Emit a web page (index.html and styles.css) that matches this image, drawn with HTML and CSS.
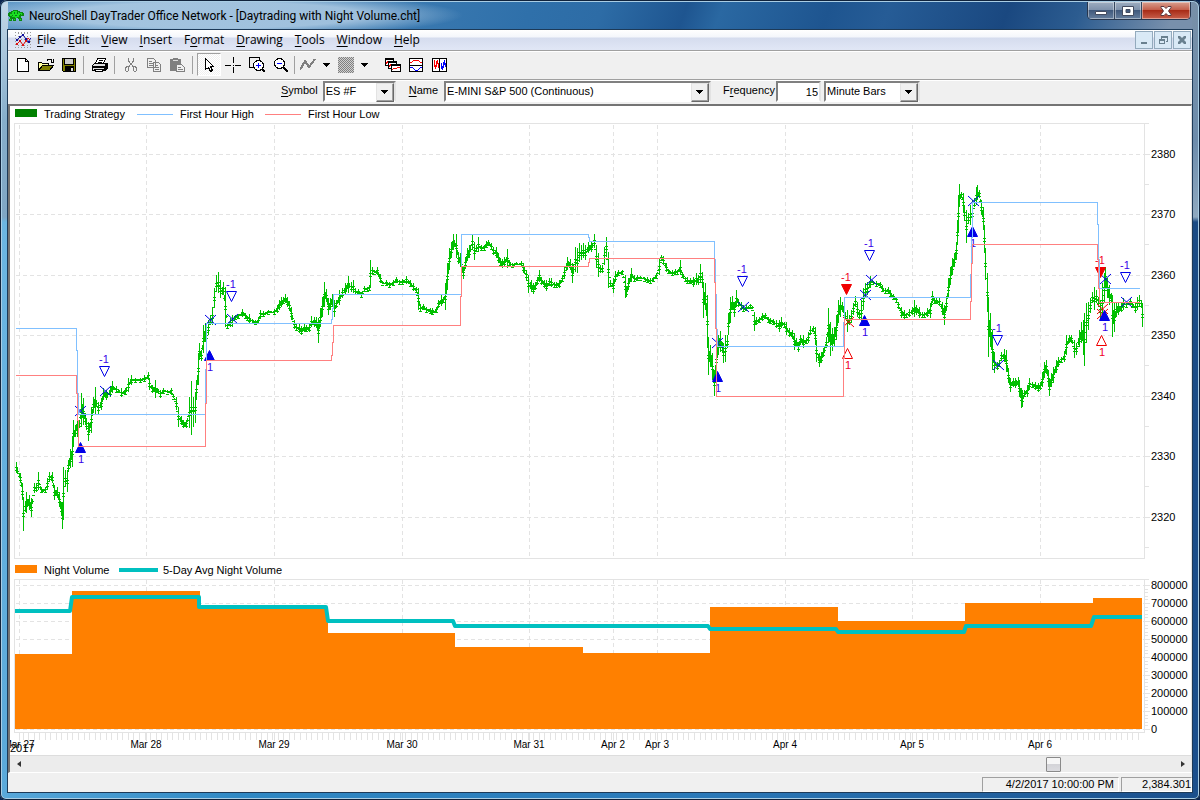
FILE: index.html
```html
<!DOCTYPE html>
<html lang="en">
<head>
<meta charset="utf-8">
<title>NeuroShell DayTrader Office Network</title>
<link rel="stylesheet" href="styles.css">
</head>
<body>
<div class="window">
  <header class="titlebar">
    <svg class="app-icon" viewBox="0 0 16 14" aria-hidden="true"><path fill="#0b8a12" d="M5 1h5v1h2v1h3v1h1v3h-3v2h1v3h-3v-2h-1v-1H8v3H5v-2H4v2H1v-2h1V8H1V7H0V4h1V3h2V2h2z"/><path fill="#18e020" d="M5 2h4v1h2v1h3v2h-3v2H9v1H7V8H4V7H2V5h2V3h1zM2 10h1v1H2zM6 10h1v1H6zM12 10h1v1h-1z"/><path fill="#0b7a12" d="M6 3h1v2H6zM9 3h1v2H9zM7 6h2v1H7zM4 6h1v1H4zM12 5h1v1h-1z"/></svg>
    <h1 class="title">NeuroShell DayTrader Office Network - [Daytrading with Night Volume.cht]</h1>
    <div class="caption">
      <button class="cap" aria-label="Minimize"><svg viewBox="0 0 14 12"><path fill="#fff" stroke="#444c60" d="M1.500 6.500h11v3h-11z"/></svg></button>
      <button class="cap" aria-label="Restore"><svg viewBox="0 0 14 12"><path fill="#fff" fill-rule="evenodd" stroke="#444c60" d="M1.500 1.500h11v9h-11zM5 4.500v3h4v-3z"/></svg></button>
      <button class="cap cap-close" aria-label="Close"><svg viewBox="0 0 14 12"><path fill="#fff" stroke="#5a3a40" d="M2 1.500h3l2 2 2-2h3v1L9.500 6l2.500 3.500v1H9l-2-2-2 2H2v-1L4.500 6 2 2.500z"/></svg></button>
    </div>
  </header>
  <main class="client">
    <nav class="menubar">
      <svg class="doc-icon" viewBox="0 0 16 16" aria-hidden="true"><path d="M.5 0v16M15.500 0v16M0 .5h16M0 15.500h16M3.500 1v14M6.500 1v14M9.500 1v14M12.500 1v14" stroke="#999" stroke-dasharray="1 2" fill="none"/><path d="M2 8l3-3 3-2 3 4 2 3 3-4" stroke="#10109c" stroke-width="1" fill="none"/><path d="M2 12l3-3 3 4 3-4 2-3 2 2" stroke="#e01010" stroke-width="1" fill="none"/><path d="M1 7h2v2H1zM4 4h2v2H4zM7 2h2v2H7zM10 6h2v2h-2zM13 9h2v2h-2z" fill="#10109c"/><path d="M1 11h2v2H1zM4 8h2v2H4zM7 12h2v2H7zM10 8h2v2h-2z" fill="#e01010"/></svg>
      <button class="menu"><u>F</u>ile</button>
      <button class="menu"><u>E</u>dit</button>
      <button class="menu"><u>V</u>iew</button>
      <button class="menu"><u>I</u>nsert</button>
      <button class="menu">F<u>o</u>rmat</button>
      <button class="menu"><u>D</u>rawing</button>
      <button class="menu"><u>T</u>ools</button>
      <button class="menu"><u>W</u>indow</button>
      <button class="menu"><u>H</u>elp</button>
      <div class="mdi">
        <button class="mdi-btn" aria-label="Minimize chart"><svg viewBox="0 0 16 16"><path d="M5 10h6v2H5z"/></svg></button>
        <button class="mdi-btn" aria-label="Restore chart"><svg viewBox="0 0 16 16"><path fill-rule="evenodd" d="M6 4h7v6h-2V9h1V6H7v1H6zM4 7h6v5H4zM5 9v2h4V9z"/></svg></button>
        <button class="mdi-btn" aria-label="Close chart"><svg viewBox="0 0 16 16"><path d="M4 4h2l2 2 2-2h2v2l-2 2 2 2v2h-2l-2-2-2 2H4v-2l2-2-2-2z"/></svg></button>
      </div>
    </nav>
    <div class="toolbar" role="toolbar" aria-label="Standard">
      <button class="tool" aria-label="New"><svg viewBox="0 0 16 16"><path fill="#fff" stroke="#000" d="M2.500 1.500h8l3 3v10h-11zM10.500 1.500v3h3"/></svg></button>
      <button class="tool" aria-label="Open"><svg viewBox="0 0 16 16"><path fill="#ffffa0" stroke="#000" d="M.5 13.500v-8h3l1 1h6v3"/><path fill="#808000" stroke="#000" d="M.5 13.500l4-5h11l-4 5z"/><path fill="none" stroke="#000" d="M9 3.500l1-1h3l1 2M15.500 2v3h-3"/></svg></button>
      <button class="tool" aria-label="Save"><svg viewBox="0 0 16 16"><path fill="#808000" stroke="#000" d="M1.500 1.500h13v13h-12l-1-1z"/><path fill="#ccc" stroke="#000" d="M3.500 1.500h9v6h-9z"/><path d="M4 9h9v6H4z"/><path fill="#ddd" d="M10 11h2v3h-2z"/></svg></button>
      <span class="sep"></span>
      <button class="tool" aria-label="Print"><svg viewBox="0 0 16 16"><path fill="#fff" stroke="#000" d="M5.500 1.500h8l-2 5h-8z"/><path stroke="#000" d="M7 3.500h4M6 5.500h4"/><path fill="#ddd" stroke="#000" d="M.5 8.500l2-2h12l-2 3v4H.5z"/><path d="M12 9l4-3v5l-3 3zM1 9h12v2H1z"/><path fill="#fff" stroke="#000" d="M2.500 12.500h9l-1 2h-7z"/></svg></button>
      <span class="sep"></span>
      <button class="tool" aria-label="Cut" disabled><svg viewBox="0 0 16 16"><path fill="none" stroke="#808080" d="M5.500 1v3l5 6M10.500 1v3l-5 6M5.500 9.500h-2l-1 2v2l1 1h1l1-1zM10.500 9.500h2l1 2v2l-1 1h-1l-1-1z"/></svg></button>
      <button class="tool" aria-label="Copy" disabled><svg viewBox="0 0 16 16"><path fill="#f0f0f0" stroke="#808080" d="M1.500 1.500h6l2 2v7h-8zM7.500 5.500h5l2 2v7h-7z"/><path stroke="#808080" d="M3 4.500h3M3 6.500h4M3 8.500h4M9 8.500h3M9 10.500h4M9 12.500h4"/></svg></button>
      <button class="tool" aria-label="Paste" disabled><svg viewBox="0 0 16 16"><path fill="#808080" d="M1 2h3V1h5v1h3v12H1z"/><path stroke="#ddd" d="M4 3.500h5"/><path fill="#f0f0f0" stroke="#808080" d="M7.500 7.500h5l3 3v4h-8z"/><path stroke="#808080" d="M9 10.500h3M9 12.500h5"/></svg></button>
      <span class="sep sep-loose"></span>
      <button class="tool tool-wide tool-on" aria-label="Pointer" aria-pressed="true"><svg viewBox="0 0 16 16"><path fill="#fff" stroke="#000" d="M4.500 1.500v11l3-2 2 4 2-1-2-4h3z"/></svg></button>
      <button class="tool tool-wide" aria-label="Crosshair"><svg viewBox="0 0 16 16"><path fill="none" stroke="#000" d="M8.500 0v6M8.500 10v6M0 8.500h6M10 8.500h6"/><path d="M8 8h1v1H8z"/></svg></button>
      <button class="tool tool-wide" aria-label="Zoom in"><svg viewBox="0 0 16 16"><path fill="none" stroke="#000" d="M5 10.500H.5v-10h10V4"/><circle cx="9.500" cy="8.500" r="5" fill="#fff" stroke="#000"/><path stroke="#00f" d="M7 8.500h5M9.500 6v5"/><path stroke="#000" stroke-width="2" d="M13 12l3 3"/></svg></button>
      <button class="tool tool-wide" aria-label="Zoom out"><svg viewBox="0 0 16 16"><circle cx="6.500" cy="6.500" r="5" fill="#fff" stroke="#000"/><path stroke="#00f" d="M4 6.500h5"/><path stroke="#000" stroke-width="2" d="M10 10l5 5"/></svg></button>
      <span class="sep sep-tight"></span>
      <button class="tool" aria-label="Line tool"><svg viewBox="0 0 16 16"><path fill="none" stroke="#808080" stroke-width="2" d="M0 13l5-9 4 6 6-8"/></svg></button>
      <button class="drop" aria-label="Line options"></button>
      <button class="tool" aria-label="Pattern tool"><span class="pattern"></span></button>
      <button class="drop" aria-label="Pattern options"></button>
      <span class="space"></span>
      <button class="tool" aria-label="Cascade charts"><svg viewBox="0 0 16 16"><path fill="#fff" stroke="#000" d="M.5 1.500h8v7h-8z"/><path stroke="#000" d="M1 2.500h8"/><path fill="none" stroke="#f00" d="M1 6.500l2-2"/><path fill="#fff" stroke="#000" d="M3.500 4.500h8v7h-8z"/><path stroke="#000" d="M4 5.500h8"/><path fill="none" stroke="#f00" d="M4 9.500l2-2"/><path fill="#fff" stroke="#000" d="M6.500 7.500h9v7h-9z"/><path stroke="#000" d="M7 8.500h9"/><path fill="none" stroke="#f00" d="M7 13l2-2 2 1 2-2 2 1"/></svg></button>
      <button class="tool" aria-label="Stack charts"><svg viewBox="0 0 16 16"><path fill="#fff" stroke="#000" d="M1.500 1.500h13v13h-13zM1.500 8.500h13"/><path fill="none" stroke="#f00" d="M2 6l2-1 2-2h4l2 2 2 1"/><path fill="none" stroke="#00f" d="M2 10l3 1 2 2h3l2-2 2-1"/></svg></button>
      <button class="tool" aria-label="Tile charts"><svg viewBox="0 0 16 16"><path fill="#fff" stroke="#000" d="M1.500 1.500h14v13h-14zM8.500 1.500v13"/><path fill="none" stroke="#f00" d="M3.500 3v7M4.500 8v4M5.500 4v6M6.500 3v4M7.500 6v5"/><path fill="none" stroke="#00f" d="M10.500 6v6M11.500 9v4M12.500 5v6M13.500 3v5M14.500 6v4"/></svg></button>
    </div>
    <form class="fields">
      <label class="lbl" for="symbol"><u>S</u>ymbol</label>
      <span class="combo combo-symbol"><select id="symbol"><option>ES #F</option></select></span>
      <label class="lbl" for="name"><u>N</u>ame</label>
      <span class="combo combo-name"><select id="name"><option>E-MINI S&amp;P 500 (Continuous)</option></select></span>
      <label class="lbl" for="freq">F<u>r</u>equency</label>
      <input class="num" id="freq" type="text" value="15">
      <span class="combo combo-unit"><select aria-label="Frequency unit"><option>Minute Bars</option></select></span>
    </form>
    <section class="chart-pane">
      <svg class="chart" id="chart" viewBox="10 106 1181 649" role="img" aria-label="E-MINI S&amp;P 500 price and night volume"></svg>
      <div class="scroll">
        <button class="arrow arrow-left" type="button" aria-label="Scroll left"></button>
        <input class="track" type="range" min="0" max="1000" value="900" aria-label="Chart position">
        <button class="arrow arrow-right" type="button" aria-label="Scroll right"></button>
      </div>
    </section>
    <footer class="status">
      <div class="cell cell-date">4/2/2017 10:00:00 PM</div>
      <div class="cell cell-price">2,384.301</div>
    </footer>
  </main>
</div>
<script src="chart.js"></script>
</body>
</html>
```

FILE: styles.css
```css
* { box-sizing: border-box; }
body { margin: 0; font-family: "Liberation Sans", Arial, sans-serif; font-size: 11px; color: #000; background: #0a2550; }
button { font: inherit; color: inherit; padding: 0; border: 0; background: none; }
svg { display: block; }
u { text-underline-offset: 2px; }

.window {
  display: flex; flex-direction: column; min-height: 100vh; padding: 0 8px 8px;
  border-radius: 7px 7px 6px 6px;
  background:
    linear-gradient(#c5d8e8 0, #86aecb 120px, #7fa6c4 217px, #6cb6e2 222px, #5aa9da 100%) left / 8px 100% no-repeat,
    linear-gradient(#7890a8 0, #6d8cab 140px, #8fa9c0 217px, #1b4b84 222px, #1b4f8c 100%) right / 8px 100% no-repeat,
    linear-gradient(90deg, #58a8da, #2f88c4 20%, #2a78b8 60%, #1b4f8c) bottom / 100% 8px no-repeat,
    #2d6ca6;
  box-shadow: inset 0 0 0 1px #10233c, inset 0 0 0 2px #a9cde4;
}
.titlebar {
  display: flex; height: 27px; margin: 2px 0 1px; align-items: center;
  background:
    radial-gradient(ellipse 250px 22px at 205px 13px, rgba(190,214,234,.75) 60%, rgba(190,214,234,0) 100%),
    linear-gradient(110deg, #5f98c6 0, #2f70aa 44%, #2d6ca6 50%, #1e5590 57%, #2a68a2 60%, #1e5590 69%, #265c96 74%, #1a4880 84%, #2c5c90 90%, #7890ac 98%);
}
.app-icon { width: 16px; height: 14px; margin-right: 5px; }
.title { flex: 1; margin: 0; font: 12px/20px Roboto, "Noto Sans", sans-serif; white-space: nowrap; }
.caption { display: flex; align-self: flex-start; margin-right: 1px; border: 1px solid #26364e; border-top: 0; border-radius: 0 0 5px 5px; overflow: hidden; }
.cap { display: flex; width: 27px; height: 17px; align-items: center; justify-content: center; border-right: 1px solid #34465e; background: linear-gradient(#9eadc0 0, #7f92ac 45%, #40597c 50%, #667f9e 100%); box-shadow: inset 0 0 0 1px rgba(255,255,255,.4); }
.cap svg { width: 14px; height: 12px; }
.cap-close { width: 48px; border-right: 0; background: linear-gradient(#d8a090 0, #c4604c 45%, #a82c18 50%, #c8604c 100%); }

.client { flex: 1; display: flex; flex-direction: column; min-height: 0; background: #f0f0f0; box-shadow: 0 0 0 1px #1d3a58; }
.menubar { display: flex; height: 21px; align-items: center; padding-left: 7px; border-bottom: 1px solid #a0a0a0; background: linear-gradient(#fff 0, #f4f6fb 35%, #d5dcee 40%, #e0e6f5 95%); font: 12px/20px "Open Sans", "Noto Sans", sans-serif; }
.doc-icon { width: 16px; height: 16px; }
.menu { margin: 0 6px; }
.mdi { display: flex; gap: 1px; margin-left: auto; padding-right: 1px; }
.mdi-btn { width: 18px; height: 18px; border: 1px solid #93aabd; background: #d9e9f6; }
.mdi-btn svg { width: 16px; height: 16px; fill: #69808f; }

.toolbar { display: flex; height: 29px; align-items: center; padding: 0 0 2px 3px; border-top: 1px solid #fff; border-bottom: 1px solid #a0a0a0; }
.tool { display: flex; width: 23px; height: 23px; align-items: center; justify-content: center; border: 1px solid transparent; }
.tool-wide { width: 24px; }
.tool svg { width: 16px; height: 16px; shape-rendering: crispEdges; }
.tool-on { border-color: #a0a0a0 #fff #fff #a0a0a0; background: repeating-conic-gradient(#fff 0 25%, #f0f0f0 0 50%) 0 0 / 2px 2px; }
.sep { width: 1px; height: 18px; margin: 0 4px 0 3px; background: #a0a0a0; }
.sep-loose { margin: 0 4px; }
.sep-tight { margin: 0 1px; }
.space { width: 9px; }
.drop { width: 15px; height: 22px; background: conic-gradient(from -45deg at 50% 100%, #000 25%, transparent 0) center / 8px 4px no-repeat; background: linear-gradient(#000, #000) 4px 9px / 7px 1px no-repeat, linear-gradient(#000, #000) 5px 10px / 5px 1px no-repeat, linear-gradient(#000, #000) 6px 11px / 3px 1px no-repeat, linear-gradient(#000, #000) 7px 12px / 1px 1px no-repeat; }
.pattern { width: 16px; height: 16px; background: repeating-conic-gradient(#808080 0 25%, #d0d0d0 0 50%) 0 0 / 2px 2px; }

.fields { display: flex; height: 24px; align-items: flex-start; padding-left: 273px; border-top: 1px solid #fff; }
.lbl { font-size: 11px; line-height: 18px; }
.combo { position: relative; height: 21px; border: 2px solid; border-color: #808080 #e3e3e3 #fff #808080; background: #fff; }
.combo select { display: block; width: 100%; height: 17px; padding: 0 0 0 1px; border: 0; outline: 0; appearance: none; background: #fff; color: #000; font: 11px/17px "Liberation Sans", Arial, sans-serif; }
.combo::after { content: ""; position: absolute; top: 0; right: 0; width: 16px; height: 17px; pointer-events: none; border: 1px solid; border-color: #e3e3e3 #696969 #696969 #e3e3e3; box-shadow: inset -1px -1px #a0a0a0; background: linear-gradient(#000, #000) 4px 6px / 7px 1px no-repeat, linear-gradient(#000, #000) 5px 7px / 5px 1px no-repeat, linear-gradient(#000, #000) 6px 8px / 3px 1px no-repeat, linear-gradient(#000, #000) 7px 9px / 1px 1px no-repeat, #f0f0f0; }
.combo-symbol { width: 73px; margin: 0 13px 0 5px; }
.combo-name { width: 267px; margin: 0 12px 0 6px; }
.num { width: 45px; height: 21px; margin: 0 3px 0 1px; padding: 0 1px; border: 2px solid; border-color: #808080 #e3e3e3 #fff #808080; font: 11px "Liberation Sans", Arial, sans-serif; text-align: right; outline: 0; }
.combo-unit { width: 96px; }

.chart-pane { flex: 1; display: flex; flex-direction: column; min-height: 0; border: solid; border-width: 2px 1px 1px 2px; border-color: #747474 #e3e3e3 #fff #747474; background: #fff; }
.chart { flex: 1; width: 100%; min-height: 0; font-family: "Liberation Sans", Arial, sans-serif; font-size: 11px; }
.grid { fill: none; stroke: #e3e3e3; shape-rendering: crispEdges; }
.dash { stroke-dasharray: 4 3; }
.date { font-size: 10px; text-anchor: middle; }
.volume { fill: #ff8000; shape-rendering: crispEdges; }
.average { fill: none; stroke: #00c0c0; stroke-width: 4; stroke-linejoin: round; }
.bars { fill: none; stroke: #00c000; shape-rendering: crispEdges; }
.high { fill: none; stroke: #80c0ff; shape-rendering: crispEdges; }
.low { fill: none; stroke: #ff8080; shape-rendering: crispEdges; }
.mark { stroke-width: 1; }
.tag { font-size: 11px; }
.blue { stroke: #0000e8; }
.red { stroke: #f00000; }
.tag-blue { fill: #3800e8; }
.tag-red { fill: #f00028; }

.scroll { display: flex; height: 17px; background: #ececec; border-top: 1px solid #ddd; }
.arrow { width: 17px; height: 16px; }
.arrow::before { content: ""; display: block; width: 0; margin: 0 auto; border: 4px solid transparent; }
.arrow-left::before { border-width: 3px 4px 3px 0; border-right-color: #333; }
.arrow-right::before { border-width: 3px 0 3px 4px; border-left-color: #333; }
.track { flex: 1; height: 16px; margin: 0; appearance: none; background: none; }
.track::-webkit-slider-thumb { appearance: none; width: 15px; height: 15px; border: 1px solid #8a8a8a; border-radius: 1px; background: linear-gradient(#f6f6f6 45%, #d4d4d8 50%, #dcdce0); }

.status { display: flex; height: 19px; justify-content: flex-end; padding-top: 4px; gap: 2px; }
.cell { height: 15px; border: 1px solid; border-color: #a0a0a0 #fff #fff #a0a0a0; line-height: 13px; text-align: right; }
.cell-date { width: 137px; padding-right: 4px; }
.cell-price { width: 71px; }
```

FILE: chart.js
```js
const svg = document.getElementById('chart');
const NS = 'http://www.w3.org/2000/svg';

function add(tag, attrs, text) {
  const node = document.createElementNS(NS, tag);
  for (const key in attrs) node.setAttribute(key, attrs[key]);
  if (text !== undefined) node.textContent = text;
  svg.appendChild(node);
}

/* Each segment: origin x, origin y, then "x:high,low" in thirds of a pixel. */
const segments = [
  [0, 310, '50:455,490 60:490,520 66:520,570 71:560,662 80:545,610 87:555,600 94:565,620 102:520,550 110:520,545 116:487,540 125:530,550 135:530,550 141:505,540 148:487,515 157:487,520 163:525,570 172:530,565 178:545,590 184:575,615 188:575,657 191:470,630 197:480,530 202:480,545 206:450,485 210:418,475 216:380,470 221:330,410 226:345,380 231:310,382 237:330,355 244:250,350 249:265,345 255:308,345 260:325,360 265:335,392 269:340,370 274:290,368 280:262,305 287:232,312 295:275,312 303:265,300 311:235,270 319:240,270 330:230,262 337:212,250 350:228,250 363:235,260 377:235,255 385:205,245 395:195,225 405:205,215 420:205,215 433:195,215 444:185,210 449:205,240 457:225,250 465:210,265 472:235,245 480:240,265 490:235,250 502:240,250 513:235,252 521:255,265 530:262,300 536:290,352 543:318,345 551:330,355 560:330,355 568:262,355 574:212,375 580:262,350 585:250,340 590:210,270 595:130,225 598:100,150 603:120,152 609:45,130 615:40,95'],
  [180, 220, '80:325,370 86:300,345 92:285,315 97:260,315 103:205,265 109:165,215 115:155,220 121:180,235 127:200,225 131:185,225 136:200,320 143:310,325 150:295,322 157:285,320 165:285,298 175:283,295 187:268,292 195:280,295 203:288,300 209:282,310 216:298,310 226:300,312 236:292,312 242:270,295 250:272,288 265:270,280 283:268,282 291:255,278 297:240,270 303:232,262 309:230,252 315:222,250 321:232,262 327:242,270 334:262,300 342:300,328 350:312,333 358:312,338 364:318,345 372:312,335 380:315,335 388:310,335 395:288,320 403:292,320 409:290,325 415:295,368 421:265,320 428:232,290 433:185,262 439:208,245 446:235,285 452:235,270 458:222,260 464:240,290 470:240,265 478:210,255 487:205,235 497:190,225 506:168,220 513:185,215 520:180,220 527:205,225 535:208,225 545:215,230 553:198,215 563:200,212 569:195,210 572:120,205 577:140,165 584:150,160 592:140,165 600:162,190 608:183,193 618:180,198 628:185,200 640:180,195 650:170,190 658:180,192 668:178,195 680:168,192 690:180,200 700:188,212 708:200,220 714:205,270 722:255,275 730:252,268 740:262,275 750:265,280 757:265,285 768:262,278 775:240,265 783:225,258 790:232,245 797:190,270 802:130,210 809:85,150 815:65,115 819:42,90 824:60,80 830:42,115 836:100,132 842:100,140'],
  [440, 220, '70:140,177 76:110,145 82:85,122 89:75,115 97:43,90 104:65,120 110:75,95 116:52,95 124:75,92 132:75,90 138:62,85 146:60,75 153:68,90 160:80,105 168:80,115 174:100,130 180:115,140 187:118,145 194:112,138 201:88,145 208:120,138 218:128,137 230:125,135 245:122,138 251:130,160 259:150,180 266:165,218 273:180,215 279:190,222 286:185,210 292:170,195 298:150,185 305:172,195 313:180,205 320:180,212 328:175,198 335:175,200 342:185,200 350:185,205 358:180,205 366:165,185 374:140,178 383:112,150 390:118,150 397:130,190 405:80,155 412:85,160 417:70,125 424:75,120 430:68,115 437:75,120 445:65,100 453:65,95 463:42,85 470:75,145 474:100,170 480:135,158 487:135,158 494:80,135 500:52,110 504:95,205 510:180,200 520:175,218 526:152,185 535:150,165 548:150,162 555:165,235 560:200,230 566:175,210 573:145,185 582:165,185 592:165,180 602:168,178 612:170,180 622:172,188 632:175,192 640:172,182 650:160,175 657:115,165 663:105,120 670:108,135 678:130,155 686:148,158 696:150,168 705:148,165 713:150,162 720:120,165 727:155,175 735:170,182 743:172,192 751:175,192 759:172,200 768:160,195 776:165,195 781:132,190 787:155,205 791:185,295 797:190,270 802:225,385 805:350,465 811:375,440 817:400,480 823:450,528'],
  [680, 220, '110:365,470 116:345,405 121:333,395 126:365,400 130:370,430 137:345,425 141:345,385 146:280,345 152:230,310 158:228,270 163:245,290 169:210,260 176:238,262 183:245,270 190:255,275 200:255,270 210:252,265 217:258,268 223:275,332 230:290,315 238:290,305 247:280,302 255:280,298 264:290,305 272:295,312 280:298,312 290:300,325 298:300,335 304:290,325 312:305,320 320:305,345 328:325,350 336:330,355 343:340,390 349:355,380 354:365,395 362:345,375 370:345,385 378:355,370 386:335,370 392:318,345 400:318,335 405:320,375 410:360,425 418:400,440 424:395,430 431:385,412 438:350,385 446:265,370 452:305,408 457:325,392 463:320,380 469:285,360 475:240,310 481:230,290 487:245,275 492:255,300 501:270,335 507:285,315 514:270,310 520:250,285 526:228,262 532:245,290 538:270,300 544:240,305 550:205,270 556:190,230 562:185,225 570:168,205 578:180,190 590:182,198 600:185,200 608:195,215 616:205,220 624:200,222 632:210,230 640:222,240 648:230,248 656:245,262 664:260,295 672:270,298 680:278,290 688:268,290 696:260,285 703:240,290 710:255,285 718:260,295 726:275,290 734:275,295 742:265,290 750:250,295 756:212,250 763:230,252 770:235,252 778:235,258 786:245,285 793:255,315 798:235,270 804:175,235 810:140,195 816:115,165 824:100,140 828:65,120 833:0,75'],
  [920, 170, '114:75,190 118:42,110 123:65,80 129:70,125 134:105,150 139:120,220 145:130,160 151:105,165 157:90,170 163:85,110 168:52,105 173:45,90 179:60,85 184:90,135 189:110,180 194:165,250 197:235,330 202:310,425 206:380,560 212:430,530 218:480,600 224:545,610 231:575,600 238:570,590 245:545,570 253:538,575 259:540,605 265:595,640 272:625,665 279:625,650 286:625,655 294:620,650 299:630,680 303:655,715 308:660,710 314:660,680 322:645,680 329:625,660 338:635,650 346:635,660 354:640,665 361:635,660 366:605,650 372:575,625 378:570,610 384:600,650 389:625,678 395:610,650 401:590,640 408:570,610 416:560,590 424:560,580 432:545,575 440:495,555 448:495,520 455:495,520 463:510,565 470:520,555 477:480,530 484:455,520 490:450,555 494:430,588 499:400,520 505:395,480 512:385,430 518:365,400 523:350,420 530:360,400 536:380,405 540:390,450 546:340,445 552:310,400 556:292,350 562:325,385 568:345,405 574:370,400 578:375,500 584:400,485 590:400,440 596:395,435 604:400,425 611:385,420 620:395,410 630:385,405 638:395,410 646:395,430 652:380,420 658:375,410 663:390,415 666:400,472']
];

const key = segments.flatMap(([ox, oy, list]) => list.split(' ').map(item => {
  const [x, hi, lo] = item.split(/[:,]/).map(Number);
  return [Math.floor(ox + x / 3), Math.round(oy + hi / 3), Math.round(oy + lo / 3)];
}));

/* Grid and axes */
const days = [[19, 'Mar 27'], [146, 'Mar 28'], [274, 'Mar 29'], [402, 'Mar 30'], [529, 'Mar 31'], [613, 'Apr 2'], [657, 'Apr 3'], [785, 'Apr 4'], [912, 'Apr 5'], [1040, 'Apr 6']];
const gridYs = [154, 214, 275, 335, 396, 456, 517];
let solid = 'M14.500 558.500V123.500H1149M14.500 558.500H1144.500V123.500M14.500 732.500V579.500H1149M14.500 732.500H1144.500V579.500';
let dashed = '';
days.forEach(([x]) => { dashed += `M${x}.5 125V558M${x}.5 580V729`; solid += `M${x}.5 733v8`; });
gridYs.forEach(y => { dashed += `M16 ${y}.5H1144`; solid += `M1144 ${y}.5h6M1144 ${y + 30}.5h5`; });
for (let v = 0; v <= 8; v++) {
  const y = 729 - v * 18;
  dashed += `M16 ${y}.5H1144`;
  solid += `M1144 ${y}.5h6`;
  for (let k = 1; k < 5 && v < 8; k++) solid += `M1144 ${Math.round(y - k * 3.6)}.5h4`;
}
for (let x = 23; x < 1144; x += 5.55) solid += `M${Math.floor(x)}.5 733v7`;
add('path', { class: 'grid dash', d: dashed });
add('path', { class: 'grid', d: solid });

/* Legends */
add('rect', { x: 15, y: 109, width: 22, height: 8, fill: '#008000' });
add('text', { x: 44, y: 118 }, 'Trading Strategy');
add('path', { class: 'high', d: 'M137 114.500h36' });
add('text', { x: 180, y: 118 }, 'First Hour High');
add('path', { class: 'low', d: 'M265 114.500h36' });
add('text', { x: 308, y: 118 }, 'First Hour Low');
add('rect', { x: 15, y: 565, width: 22, height: 8, fill: '#ff8000' });
add('text', { x: 44, y: 574 }, 'Night Volume');
add('path', { class: 'average', d: 'M119 570h39' });
add('text', { x: 163, y: 574 }, '5-Day Avg Night Volume');

/* Night volume and its average */
[[15, 72, 654], [72, 200, 591], [200, 328, 608], [328, 455, 633], [455, 583, 647], [583, 710, 653], [710, 838, 607], [838, 965, 621], [965, 1093, 603], [1093, 1142, 598]]
  .forEach(([a, b, y]) => add('rect', { class: 'volume', x: a, y, width: b - a, height: 729 - y }));
add('path', { class: 'average', d: 'M15 611H70L72 597H199V607H326L328 621H453L455 626H708L710 629H836L838 632H964L966 626H1091L1094 617H1142' });

/* Price bars: full range at each key bar, joined by open/close ticks */
let bars = '';
key.forEach(([x, hi, lo], i) => {
  const mid = Math.round((hi + lo) / 2);
  bars += `M${x}.5 ${hi}V${lo}M${x - 1} ${mid - 1}.5h3M${x - 1} ${mid + 2}.5h3`;
  const next = key[i + 1];
  if (!next) return;
  const nextMid = (next[1] + next[2]) / 2;
  if (next[0] - x > 1) {
    const half = Math.max(1, Math.min(lo - hi, next[2] - next[1]) / 4);
    for (let px = x + 1; px < next[0]; px++) {
      const t = (px - x) / (next[0] - x);
      const c = mid + (nextMid - mid) * t;
      if ((px * 7 + i) % 3) bars += `M${px}.5 ${Math.round(c - half)}V${Math.round(c + half)}`;
      bars += `M${px - 1} ${Math.round(c)}.5h3`;
    }
  }
});
add('path', { class: 'bars', d: bars });

/* Trade crosses */
[[80, 411], [105, 391], [210, 320], [232, 319], [717, 343], [743, 307], [871, 280], [865, 295], [848, 322, 1], [973, 201], [998, 365], [1102, 309, 1], [1102, 314, 1], [1105, 279], [1126, 302]]
  .forEach(([x, y, red]) => add('path', { class: red ? 'mark red' : 'mark blue', d: `M${x - 5} ${y - 5}l11 10M${x + 6} ${y - 5}l-11 10` }));

/* Buy and sell markers: x, y of the flat or pointed top */
function marker(x, y, down, red, filled) {
  const color = red ? '#f00000' : '#0000e8';
  add('path', {
    class: red ? 'mark red' : 'mark blue', fill: filled ? color : '#fff',
    d: down ? `M${x - 5}.5 ${y}.5h10l-5 10z` : `M${x - 5}.5 ${y + 10}.5h10l-5 -10z`
  });
  add('text', { class: red ? 'tag tag-red' : 'tag tag-blue', x: down ? x - 5 : x - 2, y: down ? y - 3 : y + 21 }, down ? '-1' : '1');
}
[[104, 366], [231, 291], [742, 276], [869, 250], [997, 335], [1125, 272]].forEach(([x, y]) => marker(x, y, true, false, false));
[[80, 442], [209, 350], [717, 371], [864, 315], [972, 226], [1104, 310]].forEach(([x, y]) => marker(x, y, false, false, true));
[[846, 284], [1100, 267]].forEach(([x, y]) => marker(x, y, true, true, true));
[[847, 348], [1101, 335]].forEach(([x, y]) => marker(x, y, false, true, false));

/* First hour levels */
add('path', { class: 'high', d: 'M16 328.500H76.500V350H77.500V393H78.500V414.500H205.500V369H206.500V323.500H331.500V319H332.500V308H333.500V294.500H461.500V234.500H588.500V237H589.500V241.500H714.500V259H715.500V294H716.500V329H717.500V346.500H843.500V322H844.500V297.500H970.500V274H971.500V237H972.500V202.500H1097.500V224H1098.500V259H1099.500V288.500H1140' });
add('path', { class: 'low', d: 'M16 375.500H76.500V393H77.500V420H78.500V446.500H205.500V403H206.500V360.500H331.500V355H332.500V342H333.500V325.500H460.500V296H461.500V266.500H588.500V262H589.500V258.500H714.500V282H715.500V328H716.500V396.500H843.500V358H844.500V319.500H970.500V301H971.500V263H972.500V244.500H1097.500V259H1098.500V288H1099.500V302.500H1140' });

/* Axis labels */
gridYs.forEach((y, i) => add('text', { x: 1151, y: y + 4 }, 2380 - i * 10));
for (let v = 0; v <= 8; v++) add('text', { x: 1151, y: 733 - v * 18 }, v * 100000);
days.forEach(([x, label]) => add('text', { class: 'date', x, y: 748 }, label));
add('text', { x: 10, y: 752 }, '2017');
```
